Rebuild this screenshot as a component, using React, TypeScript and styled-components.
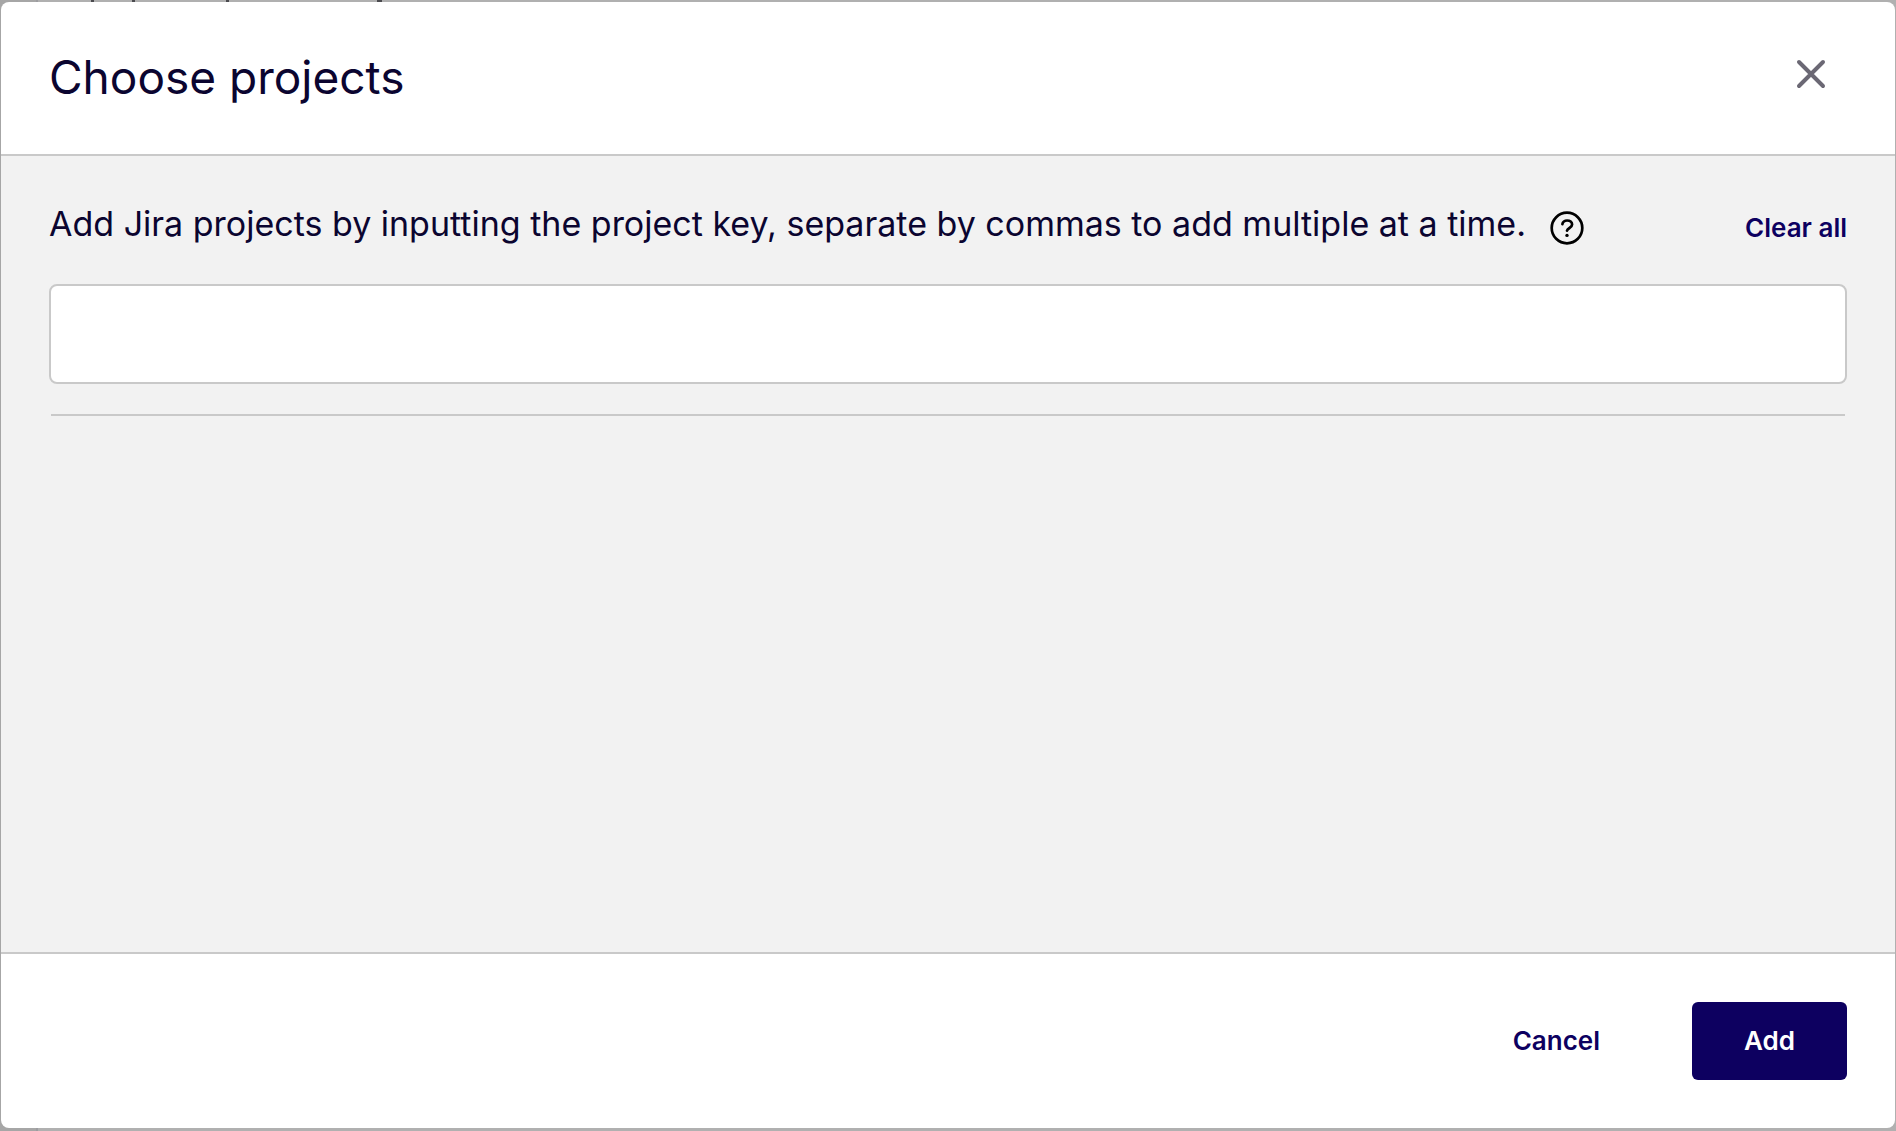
import React, { useState } from "react";
import styled, { createGlobalStyle } from "styled-components";

const GlobalStyle = createGlobalStyle`
  *, *::before, *::after { box-sizing: border-box; }
  body {
    margin: 0;
    background: #b0b0b0;
    color: #0b0530;
    font-family: Inter, "Open Sans", sans-serif;
  }
  button, input { font: inherit; }
`;

const Overlay = styled.div`
  min-height: 100vh;
  display: flex;
  padding: 2px 1px 3px;
  background: linear-gradient(to right, #a6a6a6 36px, #9c9ca0 36px 38px, #b0b0b0 38px);
`;

const PageBehind = styled.svg`
  position: absolute;
  top: 0;
  left: 0;
`;

const Dialog = styled.form`
  flex: 1;
  min-width: 0;
  display: flex;
  flex-direction: column;
  background: #fff;
  border-radius: 8px;
  overflow: hidden;
`;

const Header = styled.header`
  display: flex;
  align-items: center;
  justify-content: space-between;
  padding: 48px 60px 48px 48px;
  border-bottom: 2px solid #c9c9c9;
`;

const Title = styled.h1`
  margin: 0;
  padding-bottom: 2px;
  font-size: 46px;
  line-height: 54px;
  font-weight: 400;
`;

const IconButton = styled.button`
  display: flex;
  padding: 0;
  border: 0;
  background: none;
  color: inherit;
  cursor: pointer;
`;

const CloseButton = styled(IconButton)`
  align-self: flex-start;
  padding: 6px;
  color: #6b6874;
`;

const Body = styled.main`
  flex: 1;
  padding: 48px;
  background: #f2f2f2;
`;

const LabelRow = styled.div`
  display: flex;
  align-items: center;
  gap: 24px;
  height: 48px;
  margin-bottom: 32px;
`;

const Label = styled.label`
  font-size: 34px;
  line-height: 40px;
  padding-bottom: 8px;
`;

const HelpButton = styled(IconButton)`
  color: #000;
`;

const TextButton = styled.button`
  padding: 0;
  border: 0;
  background: none;
  color: #0d0060;
  font-size: 26px;
  line-height: 40px;
  font-weight: 600;
  cursor: pointer;
`;

const ClearButton = styled(TextButton)`
  margin-left: auto;
`;

const ProjectInput = styled.input`
  display: block;
  width: 100%;
  height: 100px;
  padding: 0 24px;
  border: 2px solid #c9c9c9;
  border-radius: 8px;
  background: #fff;
  color: inherit;
  font-size: 34px;
`;

const Divider = styled.hr`
  margin: 30px 2px 0;
  border: 0;
  border-top: 2px solid #c9c9c9;
`;

const Footer = styled.footer`
  display: flex;
  justify-content: flex-end;
  align-items: center;
  gap: 40px;
  padding: 48px;
  border-top: 2px solid #c9c9c9;
`;

const CancelButton = styled(TextButton)`
  padding: 19px 52px;
`;

const AddButton = styled(TextButton)`
  padding: 19px 52px;
  border-radius: 6px;
  background: #0d0060;
  color: #fff;
`;

export default function App() {
  const [keys, setKeys] = useState("");
  return (
    <>
      <GlobalStyle />
      <PageBehind width="400" height="2" aria-hidden="true">
        <path d="M91 0h3v2h-3zM132 0h3v2h-3zM226 0h3v2h-3zM377 0h5v2h-5z" fill="#4a4a4e" />
      </PageBehind>
      <Overlay>
        <Dialog
          role="dialog"
          aria-labelledby="dialog-title"
          onSubmit={(event) => event.preventDefault()}
        >
          <Header>
            <Title id="dialog-title">Choose projects</Title>
            <CloseButton type="button" aria-label="Close">
              <svg width="36" height="36" viewBox="0 0 36 36" fill="none" stroke="currentColor" strokeWidth="4" strokeLinecap="round">
                <path d="M6 6l24 24M30 6L6 30" />
              </svg>
            </CloseButton>
          </Header>
          <Body>
            <LabelRow>
              <Label htmlFor="project-keys">
                Add Jira projects by inputting the project key, separate by commas to add multiple at a time.
              </Label>
              <HelpButton type="button" aria-label="Help">
                <svg width="34" height="34" viewBox="0 0 34 34" fill="none" stroke="currentColor" strokeLinecap="round">
                  <circle cx="17" cy="17" r="15.3" strokeWidth="2.7" />
                  <path d="M12.4 13.2a4.8 4.1 0 0 1 4.7-3.7c2.9 0 5 1.7 5 4.1 0 3.4-4.4 3.2-5.1 6" strokeWidth="2.7" />
                  <circle cx="17" cy="24.4" r="1.7" fill="currentColor" stroke="none" />
                </svg>
              </HelpButton>
              <ClearButton type="button" onClick={() => setKeys("")}>Clear all</ClearButton>
            </LabelRow>
            <ProjectInput
              id="project-keys"
              type="text"
              value={keys}
              onChange={(event) => setKeys(event.target.value)}
            />
            <Divider />
          </Body>
          <Footer>
            <CancelButton type="button">Cancel</CancelButton>
            <AddButton type="submit">Add</AddButton>
          </Footer>
        </Dialog>
      </Overlay>
    </>
  );
}
